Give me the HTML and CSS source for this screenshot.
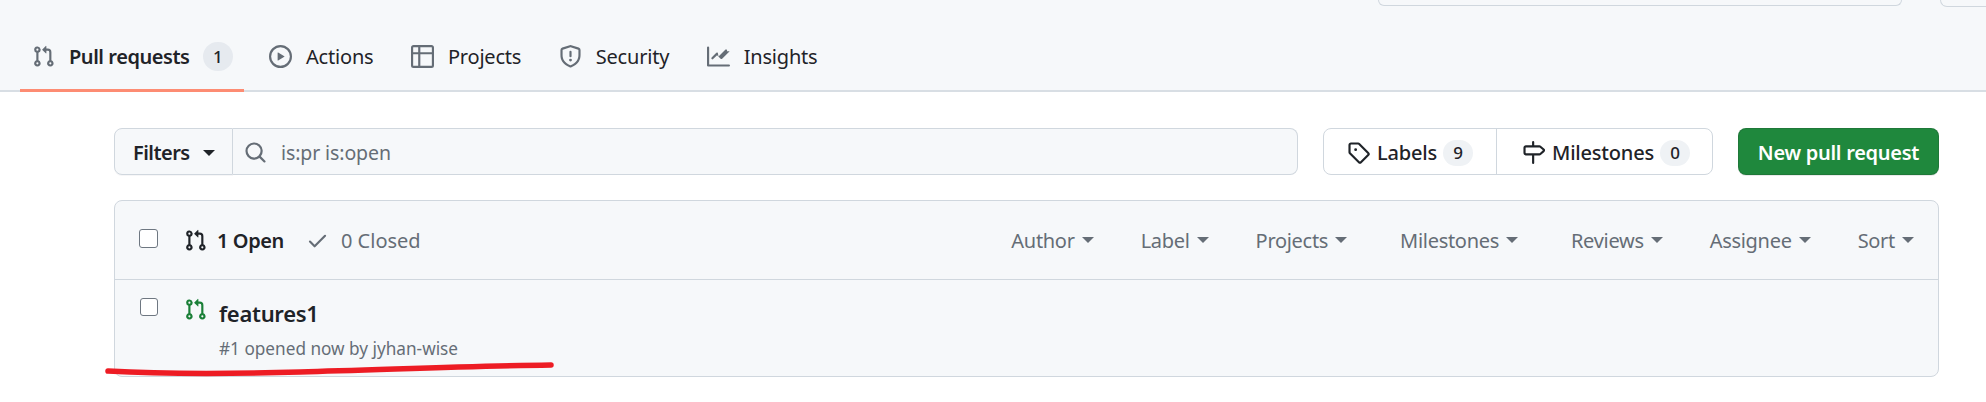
FILE: index.html
```html
<!DOCTYPE html>
<html lang="en">
<head>
<meta charset="utf-8">
<title>Pull requests</title>
<link rel="stylesheet" href="styles.css">
</head>
<body>
<svg class="defs" width="0" height="0" aria-hidden="true">
  <symbol id="i-pr" viewBox="0 0 16 16"><path d="M1.5 3.25a2.25 2.25 0 1 1 3 2.122v5.256a2.251 2.251 0 1 1-1.5 0V5.372A2.25 2.25 0 0 1 1.5 3.25Zm5.677-.177L9.573.677A.25.25 0 0 1 10 .854V2.5h1A2.5 2.5 0 0 1 13.5 5v5.628a2.251 2.251 0 1 1-1.5 0V5a1 1 0 0 0-1-1h-1v1.646a.25.25 0 0 1-.427.177L7.177 3.427a.25.25 0 0 1 0-.354ZM3.75 2.5a.75.75 0 1 0 0 1.5.75.75 0 0 0 0-1.5Zm0 9.5a.75.75 0 1 0 0 1.5.75.75 0 0 0 0-1.5Zm8.25.75a.75.75 0 1 0 1.5 0 .75.75 0 0 0-1.5 0Z"/></symbol>
  <symbol id="i-play" viewBox="0 0 16 16"><path d="M8 0a8 8 0 1 1 0 16A8 8 0 0 1 8 0ZM1.5 8a6.5 6.5 0 1 0 13 0 6.5 6.5 0 0 0-13 0Zm4.879-2.773 4.264 2.559a.25.25 0 0 1 0 .428l-4.264 2.559A.25.25 0 0 1 6 10.559V5.442a.25.25 0 0 1 .379-.215Z"/></symbol>
  <symbol id="i-table" viewBox="0 0 16 16"><path d="M0 1.75C0 .784.784 0 1.75 0h12.5C15.216 0 16 .784 16 1.75v12.5A1.75 1.75 0 0 1 14.25 16H1.75A1.75 1.75 0 0 1 0 14.25ZM6.5 6.5v8h7.75a.25.25 0 0 0 .25-.25V6.5Zm8-1.5V1.75a.25.25 0 0 0-.25-.25H6.5V5Zm-13 1.5v7.75c0 .138.112.25.25.25H5v-8ZM5 5V1.5H1.75a.25.25 0 0 0-.25.25V5Z"/></symbol>
  <symbol id="i-shield" viewBox="0 0 16 16"><path d="M7.467.133a1.748 1.748 0 0 1 1.066 0l5.25 1.68A1.75 1.75 0 0 1 15 3.48V7c0 1.566-.32 3.182-1.303 4.682-.983 1.498-2.585 2.813-5.032 3.855a1.697 1.697 0 0 1-1.33 0c-2.447-1.042-4.049-2.357-5.032-3.855C1.32 10.182 1 8.566 1 7V3.48a1.75 1.75 0 0 1 1.217-1.667Zm.61 1.429a.25.25 0 0 0-.153 0l-5.25 1.68a.25.25 0 0 0-.174.238V7c0 1.358.275 2.666 1.057 3.86.784 1.194 2.121 2.34 4.366 3.297a.196.196 0 0 0 .154 0c2.245-.956 3.582-2.104 4.366-3.298C13.225 9.666 13.5 8.36 13.5 7V3.48a.251.251 0 0 0-.174-.237l-5.25-1.68ZM8.75 4.75v3a.75.75 0 0 1-1.5 0v-3a.75.75 0 0 1 1.5 0ZM9 10.5a1 1 0 1 1-2 0 1 1 0 0 1 2 0Z"/></symbol>
  <symbol id="i-graph" viewBox="0 0 16 16"><path d="M1.5 1.75V13.5h13.75a.75.75 0 0 1 0 1.5H.75a.75.75 0 0 1-.75-.75V1.75a.75.75 0 0 1 1.5 0Zm14.28 2.53-5.25 5.25a.75.75 0 0 1-1.06 0L7 7.06 4.28 9.78a.751.751 0 0 1-1.042-.018.751.751 0 0 1-.018-1.042l3.25-3.25a.75.75 0 0 1 1.06 0L8 7.94l4.72-4.72a.751.751 0 0 1 1.042.018.751.751 0 0 1 .018 1.042Z"/></symbol>
  <symbol id="i-search" viewBox="0 0 16 16"><path d="M10.68 11.74a6 6 0 0 1-7.922-8.982 6 6 0 0 1 8.982 7.922l3.04 3.04a.749.749 0 0 1-.326 1.275.749.749 0 0 1-.734-.215ZM11.5 7a4.499 4.499 0 1 0-8.997 0A4.499 4.499 0 0 0 11.5 7Z"/></symbol>
  <symbol id="i-tag" viewBox="0 0 16 16"><path d="M1 7.775V2.75C1 1.784 1.784 1 2.75 1h5.025c.464 0 .91.184 1.238.513l6.25 6.25a1.75 1.75 0 0 1 0 2.474l-5.026 5.026a1.75 1.75 0 0 1-2.474 0l-6.25-6.25A1.752 1.752 0 0 1 1 7.775Zm1.5 0c0 .066.026.13.073.177l6.25 6.25a.25.25 0 0 0 .354 0l5.025-5.025a.25.25 0 0 0 0-.354l-6.25-6.25a.25.25 0 0 0-.177-.073H2.75a.25.25 0 0 0-.25.25ZM6 5a1 1 0 1 1 0 2 1 1 0 0 1 0-2Z"/></symbol>
  <symbol id="i-milestone" viewBox="0 0 16 16"><path d="M7.75 0a.75.75 0 0 1 .75.75V3h3.634c.414 0 .814.147 1.13.414l2.07 1.75a1.75 1.75 0 0 1 0 2.672l-2.07 1.75a1.75 1.75 0 0 1-1.13.414H8.5v5.25a.75.75 0 0 1-1.5 0V10H2.75A1.75 1.75 0 0 1 1 8.25v-3.5C1 3.784 1.784 3 2.75 3H7V.75A.75.75 0 0 1 7.75 0Zm4.384 8.5a.25.25 0 0 0 .161-.06l2.07-1.75a.248.248 0 0 0 0-.38l-2.07-1.75a.25.25 0 0 0-.161-.06H2.75a.25.25 0 0 0-.25.25v3.5c0 .138.112.25.25.25h9.384Z"/></symbol>
  <symbol id="i-check" viewBox="0 0 16 16"><path d="M13.78 4.22a.75.75 0 0 1 0 1.06l-7.25 7.25a.75.75 0 0 1-1.06 0L2.22 9.28a.751.751 0 0 1 .018-1.042.751.751 0 0 1 1.042-.018L6 10.94l6.72-6.72a.75.75 0 0 1 1.06 0Z"/></symbol>
</svg>

<header class="repo-head">
  <div class="cut-row">
    <div class="cut-box cut-search"></div>
    <div class="cut-box cut-btn"></div>
  </div>
  <nav class="tabs">
    <a class="tab tab-active"><svg class="ico"><use href="#i-pr"/></svg><span>Pull requests</span><span class="counter">1</span></a>
    <a class="tab"><svg class="ico"><use href="#i-play"/></svg><span>Actions</span></a>
    <a class="tab"><svg class="ico"><use href="#i-table"/></svg><span>Projects</span></a>
    <a class="tab"><svg class="ico"><use href="#i-shield"/></svg><span>Security</span></a>
    <a class="tab"><svg class="ico"><use href="#i-graph"/></svg><span>Insights</span></a>
  </nav>
</header>

<main class="content">
  <div class="subnav">
    <div class="filter-group">
      <button class="filters-btn">Filters<span class="caret caret-dark"></span></button>
      <div class="search">
        <svg class="ico search-ico"><use href="#i-search"/></svg>
        <span>is:pr is:open</span>
      </div>
    </div>
    <div class="link-group">
      <a class="link link-labels"><svg class="ico ico-dark"><use href="#i-tag"/></svg><span>Labels</span><span class="pill">9</span></a>
      <a class="link link-miles"><svg class="ico ico-dark"><use href="#i-milestone"/></svg><span>Milestones</span><span class="pill">0</span></a>
    </div>
    <button class="new-btn">New pull request</button>
  </div>

  <section class="box">
    <div class="box-head">
      <span class="check check-head"></span>
      <div class="states">
        <a class="state state-open"><svg class="ico ico-dark"><use href="#i-pr"/></svg><span>1 Open</span></a>
        <a class="state state-closed"><svg class="ico check-ico"><use href="#i-check"/></svg><span>0 Closed</span></a>
      </div>
      <div class="menus">
        <span class="menu">Author<span class="caret"></span></span>
        <span class="menu">Label<span class="caret"></span></span>
        <span class="menu">Projects<span class="caret"></span></span>
        <span class="menu menu-wide">Milestones<span class="caret"></span></span>
        <span class="menu">Reviews<span class="caret"></span></span>
        <span class="menu">Assignee<span class="caret"></span></span>
        <span class="menu">Sort<span class="caret"></span></span>
      </div>
    </div>
    <div class="row">
      <span class="check check-row"></span>
      <svg class="ico ico-green"><use href="#i-pr"/></svg>
      <div class="row-text">
        <a class="row-title">features1</a>
        <p class="row-meta">#1 opened now by jyhan-wise</p>
      </div>
    </div>
  </section>
</main>

<svg class="scribble" width="1986" height="402" viewBox="0 0 1986 402" aria-hidden="true">
  <path d="M108 371 C 160 374, 230 374, 300 372 C 380 370, 470 366, 551 365" fill="none" stroke="#ed1c24" stroke-width="5.5" stroke-linecap="round"/>
</svg>
```

FILE: styles.css
```css
* { box-sizing: border-box; }

html, body {
  margin: 0;
  background: #fff;
}

body {
  position: relative;
  width: 1986px;
  height: 402px;
  overflow: hidden;
  font-family: "Noto Sans", "Open Sans", "Liberation Sans", sans-serif;
  font-size: 20px;
  color: #1f2328;
}

.defs { position: absolute; }

.ico {
  width: 23px;
  height: 23px;
  flex: none;
  fill: #656d76;
}

.ico-dark { fill: #1f2328; }
.ico-green { fill: #1a7f37; }

.repo-head {
  height: 92px;
  background: #f6f8fa;
  border-bottom: 2px solid #d8dee4;
}

.cut-row {
  height: 7px;
  display: flex;
  justify-content: flex-end;
  gap: 38px;
}

.cut-box {
  background: #f6f8fa;
  border: 1px solid #d0d7de;
  border-top: 0;
  border-radius: 0 0 8px 8px;
}

.cut-search { width: 524px; height: 6px; }
.cut-btn { width: 46px; height: 7px; border-right: 0; border-bottom-right-radius: 0; }

.tabs {
  display: flex;
  height: 83px;
  padding-left: 20px;
  gap: 13.5px;
}

.tab {
  display: flex;
  align-items: center;
  gap: 14px;
  height: 85px;
  padding: 16px 12px 0;
  letter-spacing: -0.2px;
  border-bottom: 3px solid transparent;
}

.tab-active {
  font-weight: 600;
  letter-spacing: -0.45px;
  border-bottom-color: #fd8c73;
  padding-right: 11px;
}

.counter {
  width: 30px;
  height: 29px;
  margin-left: -1px;
  border-radius: 15px;
  background: #e6eaef;
  font-size: 17px;
  font-weight: 500;
  line-height: 29px;
  text-align: center;
}

.content {
  padding: 36px 47px 0 114px;
}

.subnav {
  display: flex;
  height: 47px;
}

.filter-group {
  display: flex;
  flex: 1;
  height: 47px;
}

.filters-btn {
  display: flex;
  align-items: center;
  width: 119px;
  padding: 2px 0 0 18px;
  gap: 13px;
  background: #f6f8fa;
  border: 1px solid #d0d7de;
  border-radius: 8px 0 0 8px;
  box-shadow: 0 1px 0 rgba(31, 35, 40, 0.04);
  color: #1f2328;
  font: 600 20px "Noto Sans", sans-serif;
  letter-spacing: -0.55px;
}

.search {
  display: flex;
  flex: 1;
  align-items: center;
  gap: 14px;
  padding: 2px 0 0 11px;
  background: #f6f8fa;
  border: 1px solid #d0d7de;
  border-left: 0;
  border-radius: 0 8px 8px 0;
  color: #656d76;
  font-size: 19.5px;
  letter-spacing: -0.1px;
}

.caret {
  display: inline-block;
  width: 0;
  height: 0;
  border-style: solid;
  border-width: 6px 6px 0;
  border-color: #656d76 transparent transparent;
}

.caret-dark { border-top-color: #1f2328; }

.link-group {
  display: flex;
  width: 390px;
  margin-left: 25px;
  background: #fff;
  border: 1px solid #d0d7de;
  border-radius: 8px;
}

.link {
  display: flex;
  align-items: center;
  gap: 7px;
  padding-top: 2px;
  font-weight: 500;
  letter-spacing: -0.2px;
}

.link-labels {
  width: 173px;
  padding-left: 23px;
  border-right: 1px solid #d0d7de;
}

.link-miles { padding-left: 25px; }

.pill {
  width: 30px;
  height: 26px;
  margin-left: -1px;
  border-radius: 13px;
  background: #eff2f5;
  font-size: 17px;
  line-height: 26px;
  text-align: center;
}

.new-btn {
  width: 201px;
  margin-left: 25px;
  padding: 2px 0 0;
  background: #1f883d;
  border: 1px solid rgba(31, 35, 40, 0.15);
  border-radius: 8px;
  box-shadow: 0 1px 0 rgba(31, 35, 40, 0.1);
  color: #fff;
  font: 600 20px "Noto Sans", sans-serif;
  letter-spacing: -0.27px;
}

.box {
  height: 177px;
  margin-top: 25px;
  background: #f6f8fa;
  border: 1px solid #d0d7de;
  border-radius: 8px;
}

.box-head {
  display: flex;
  align-items: center;
  height: 79px;
  padding: 0 24px;
  border-bottom: 1px solid #d0d7de;
}

.check {
  flex: none;
  width: 19px;
  height: 19px;
  background: #fff;
  border: 1px solid #6e7781;
  border-radius: 3px;
}

.check-head { margin-top: -3px; }

.states {
  display: flex;
  align-items: center;
  gap: 22px;
  margin-left: 26px;
}

.state {
  display: flex;
  align-items: center;
}

.state-open {
  gap: 10px;
  font-weight: 600;
  letter-spacing: -0.4px;
}

.state-closed {
  gap: 12px;
  color: #656d76;
}

.check-ico { fill: #656d76; }

.menus {
  display: flex;
  align-items: center;
  gap: 47px;
  margin-left: auto;
}

.menu {
  display: flex;
  align-items: center;
  gap: 7px;
  color: #656d76;
  letter-spacing: -0.3px;
}

.menu-wide { margin: 0 6px; }

.row {
  display: flex;
  align-items: flex-start;
  height: 96px;
  padding: 18px 0 0 25px;
}

.check-row { width: 18px; height: 18px; }

.row .ico { margin: 0 0 0 26px; }

.row-text {
  margin-left: 12px;
}

.row-title {
  display: block;
  margin-top: -1px;
  font-size: 22px;
  font-weight: 600;
  line-height: 32px;
  letter-spacing: -0.3px;
}

.row-meta {
  margin: 9px 0 0;
  font-size: 17.2px;
  line-height: 22px;
  color: #656d76;
}

.scribble {
  position: absolute;
  top: 0;
  left: 0;
  pointer-events: none;
}
```
